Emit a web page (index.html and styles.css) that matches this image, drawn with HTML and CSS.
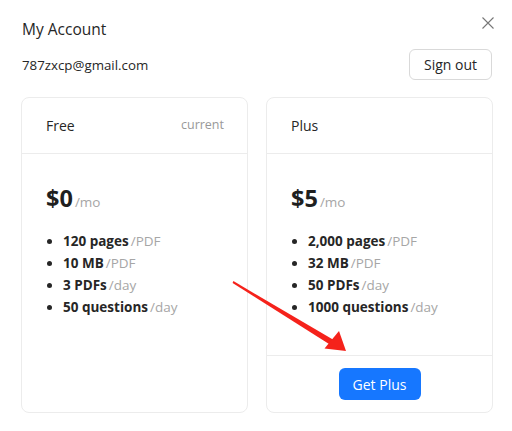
FILE: index.html
```html
<!DOCTYPE html>
<html>
<head>
<meta charset="utf-8">
<link rel="stylesheet" href="styles.css">
</head>
<body>
<div class="dialog">
  <div class="head">
    <div class="title">My Account</div>
    <button class="close" aria-label="Close">
      <svg width="12" height="12" viewBox="0 0 12 12"><path d="M0.5 0.5L11.5 11.5M11.5 0.5L0.5 11.5" stroke="#777" stroke-width="1.1" fill="none"/></svg>
    </button>
  </div>
  <div class="account">
    <div class="email">787zxcp@gmail.com</div>
    <button class="signout">Sign out</button>
  </div>
  <div class="plans">
    <div class="card">
      <div class="card-head"><span class="name">Free</span><span class="tag">current</span></div>
      <div class="card-body">
        <div class="price"><span class="amount">$0</span><span class="per">/mo</span></div>
        <ul class="features">
          <li><b>120 pages</b><span class="unit">/PDF</span></li>
          <li><b>10 MB</b><span class="unit">/PDF</span></li>
          <li><b>3 PDFs</b><span class="unit">/day</span></li>
          <li><b>50 questions</b><span class="unit">/day</span></li>
        </ul>
      </div>
    </div>
    <div class="card">
      <div class="card-head"><span class="name">Plus</span></div>
      <div class="card-body">
        <div class="price"><span class="amount">$5</span><span class="per">/mo</span></div>
        <ul class="features">
          <li><b>2,000 pages</b><span class="unit">/PDF</span></li>
          <li><b>32 MB</b><span class="unit">/PDF</span></li>
          <li><b>50 PDFs</b><span class="unit">/day</span></li>
          <li><b>1000 questions</b><span class="unit">/day</span></li>
        </ul>
      </div>
      <div class="card-foot"><button class="primary">Get Plus</button></div>
    </div>
  </div>
</div>
<svg class="arrow" width="512" height="431" viewBox="0 0 512 431">
  <polygon points="232.6,282.9 233.4,281.1 334.6,340.6 331.4,345.4" fill="#f5221b"/>
  <polygon points="346,351 324.5,348.5 339,331" fill="#f5221b"/>
</svg>
</body>
</html>
```

FILE: styles.css
```css
* { box-sizing: border-box; }
html, body { margin: 0; padding: 0; background: #fff; }
body {
  font-family: "Open Sans", "Noto Sans", sans-serif;
  color: #1f1f1f;
  width: 512px;
  height: 431px;
  position: relative;
  overflow: hidden;
}
.dialog {
  padding: 18px 20px 0 21px;
  display: flex;
  flex-direction: column;
}
.head {
  display: flex;
  justify-content: space-between;
  align-items: flex-start;
  padding-left: 1px;
}
.title {
  font-size: 15.5px;
  line-height: 23px;
  font-weight: 500;
  color: #262626;
}
.close {
  border: 0;
  background: none;
  padding: 0;
  margin: -1px -2px 0 0;
  width: 12px;
  height: 12px;
  display: flex;
}
.account {
  display: flex;
  justify-content: space-between;
  align-items: center;
  margin-top: 8px;
  padding-left: 1px;
}
.email {
  font-size: 13.3px;
  color: #262626;
}
.signout {
  font-family: inherit;
  font-size: 14px;
  color: #262626;
  background: #fff;
  border: 1px solid #d9d9d9;
  border-radius: 6px;
  width: 83px;
  height: 31px;
  padding: 0;
}
.plans {
  margin-top: 17px;
  display: grid;
  grid-template-columns: 227px 227px;
  column-gap: 18px;
  height: 316px;
}
.card {
  border: 1px solid #ececec;
  border-radius: 8px;
  display: flex;
  flex-direction: column;
}
.card-head {
  height: 56px;
  border-bottom: 1px solid #ececec;
  display: flex;
  align-items: center;
  justify-content: space-between;
  padding: 0 23px 0 24px;
}
.name { font-size: 14px; color: #262626; }
.tag { font-size: 12.5px; color: #999; margin-top: -3px; }
.card-body {
  flex: 1;
  padding: 27px 24px 0 24px;
}
.price { display: flex; align-items: baseline; }
.amount { font-size: 23.5px; font-weight: 700; color: #1f1f1f; line-height: 34px; }
.per { font-size: 13.5px; color: #a6a6a6; margin-left: 2px; }
.features {
  list-style: none;
  margin: 15px 0 0 0;
  padding: 0;
}
.features li {
  font-size: 13.5px;
  line-height: 22px;
  display: flex;
  align-items: center;
}
.features li::before {
  content: "";
  width: 5px;
  height: 5px;
  border-radius: 50%;
  background: #262626;
  margin: 0 11px 0 1px;
}
.features b { font-weight: 700; color: #262626; }
.unit { color: #a6a6a6; margin-left: 2px; }
.card-foot {
  border-top: 1px solid #ececec;
  height: 57px;
  display: flex;
  justify-content: center;
  padding-top: 12px;
}
.primary {
  font-family: inherit;
  font-size: 14px;
  color: #fff;
  background: #1677ff;
  border: 0;
  border-radius: 6px;
  width: 82px;
  height: 32px;
  padding: 0;
}
.arrow {
  position: absolute;
  left: 0;
  top: 0;
  pointer-events: none;
}
```
